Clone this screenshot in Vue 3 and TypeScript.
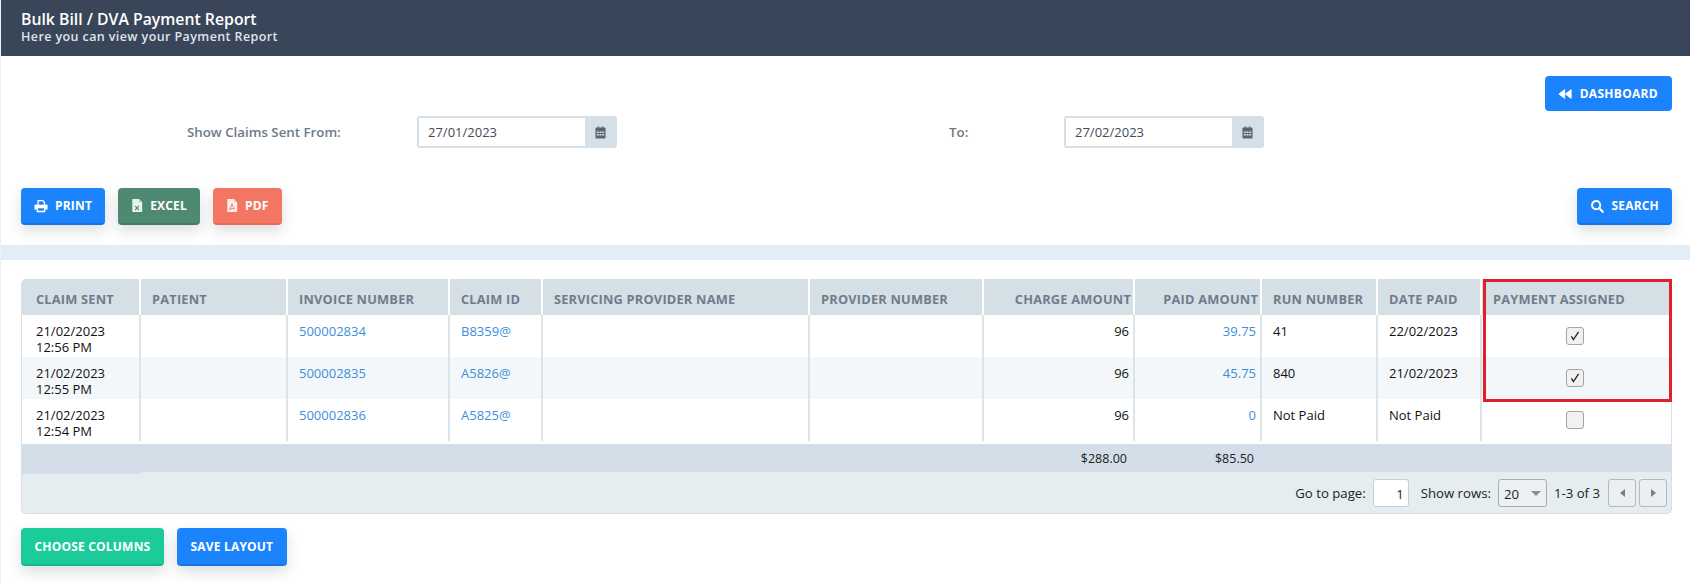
<script setup lang="ts">
interface Row {
  date: string
  time: string
  invoice: string
  claim: string
  paid: string
  run: string
  datePaid: string
  assigned: boolean
}

const columns: { label: string; width: number; right?: boolean }[] = [
  { label: 'Claim Sent', width: 119 },
  { label: 'Patient', width: 147 },
  { label: 'Invoice Number', width: 162 },
  { label: 'Claim ID', width: 93 },
  { label: 'Servicing Provider Name', width: 267 },
  { label: 'Provider Number', width: 174 },
  { label: 'Charge Amount', width: 151, right: true },
  { label: 'Paid Amount', width: 127, right: true },
  { label: 'Run Number', width: 116 },
  { label: 'Date Paid', width: 104 },
  { label: 'Payment Assigned', width: 189 }
]

const rows: Row[] = [
  { date: '21/02/2023', time: '12:56 PM', invoice: '500002834', claim: 'B8359@', paid: '39.75', run: '41', datePaid: '22/02/2023', assigned: true },
  { date: '21/02/2023', time: '12:55 PM', invoice: '500002835', claim: 'A5826@', paid: '45.75', run: '840', datePaid: '21/02/2023', assigned: true },
  { date: '21/02/2023', time: '12:54 PM', invoice: '500002836', claim: 'A5825@', paid: '0', run: 'Not Paid', datePaid: 'Not Paid', assigned: false }
]
</script>

<template>
  <div class="page">
    <header class="banner">
      <h1>Bulk Bill / DVA Payment Report</h1>
      <p>Here you can view your Payment Report</p>
    </header>

    <section class="controls">
      <div class="dash-row">
        <button class="btn blue flat">
          <svg class="ico" viewBox="0 0 16 16"><path d="M7.6 3v10L1 8zM15 3v10L8.4 8z" fill="#fff" stroke="#fff" stroke-width="1" stroke-linejoin="round" /></svg>
          Dashboard
        </button>
      </div>

      <div class="filters">
        <label class="lbl from">Show Claims Sent From:</label>
        <div class="date">
          <input value="27/01/2023" readonly />
          <span class="addon">
            <svg viewBox="0 0 12 14" width="11" height="13"><path d="M3 0.5h1.4v2H3zM7.6 0.5H9v2H7.6z" fill="#5a6574" /><rect x="0.5" y="1.6" width="11" height="12" rx="1.2" fill="#5a6574" /><path d="M2 6h2.2v1.6H2zM4.9 6h2.2v1.6H4.9zM7.8 6H10v1.6H7.8zM2 8.6h2.2v1.6H2zM4.9 8.6h2.2v1.6H4.9zM7.8 8.6H10v1.6H7.8z" fill="#d4dfe8" /></svg>
          </span>
        </div>
        <label class="lbl to">To:</label>
        <div class="date">
          <input value="27/02/2023" readonly />
          <span class="addon">
            <svg viewBox="0 0 12 14" width="11" height="13"><path d="M3 0.5h1.4v2H3zM7.6 0.5H9v2H7.6z" fill="#5a6574" /><rect x="0.5" y="1.6" width="11" height="12" rx="1.2" fill="#5a6574" /><path d="M2 6h2.2v1.6H2zM4.9 6h2.2v1.6H4.9zM7.8 6H10v1.6H7.8zM2 8.6h2.2v1.6H2zM4.9 8.6h2.2v1.6H4.9zM7.8 8.6H10v1.6H7.8z" fill="#d4dfe8" /></svg>
          </span>
        </div>
      </div>

      <div class="actions">
        <div class="group">
          <button class="btn blue">
            <svg class="ico" viewBox="0 0 16 16"><path fill="#fff" fill-rule="evenodd" d="M4 1h6.4L12.5 3v3.2H14a1.5 1.5 0 0 1 1.5 1.5V12H13v3H3v-3H.5V7.7A1.5 1.5 0 0 1 2 6.2h2zM5.5 2.5v4h5.5V3.6L9.8 2.5zM4.6 10.6v2.9h6.8v-2.9z" /></svg>
            Print
          </button>
          <button class="btn green">
            <svg class="ico file" viewBox="2 0 12 16"><path d="M3 1h7l3.5 3.5V15H3z" fill="#eaf4ef" /><path d="M10 1v3.5h3.5" fill="#b9d4c8" /><path d="M6 8.5l4 4.5M10 8.5L6 13" stroke="#4e8a72" stroke-width="1.2" fill="none" /></svg>
            Excel
          </button>
          <button class="btn red">
            <svg class="ico file" viewBox="2 0 12 16"><path d="M3 1h7l3.5 3.5V15H3z" fill="#fdeee9" /><path d="M10 1v3.5h3.5" fill="#f8c4b9" /><path d="M8 6c-.6 2 -1.6 5 -3 6.5c2-1.4 4-1.6 6-1.4c-1.4-1-2.6-3.2-3-5.1z" stroke="#f27663" stroke-width="1" fill="none" /></svg>
            PDF
          </button>
        </div>
        <button class="btn blue">
          <svg class="ico" viewBox="0 0 16 16"><circle cx="7" cy="7" r="4.7" fill="none" stroke="#fff" stroke-width="2.2" /><path d="M10.6 10.6L14.5 14.5" stroke="#fff" stroke-width="2.6" stroke-linecap="round" /></svg>
          Search
        </button>
      </div>
    </section>

    <div class="band"></div>

    <section class="results">
      <div class="grid-wrap">
        <table>
          <colgroup>
            <col v-for="c in columns" :key="c.label" :style="{ width: c.width + 'px' }" />
          </colgroup>
          <thead>
            <tr>
              <th v-for="c in columns" :key="c.label" :class="{ right: c.right }">{{ c.label }}</th>
            </tr>
          </thead>
          <tbody>
            <tr v-for="r in rows" :key="r.invoice">
              <td>{{ r.date }}<br />{{ r.time }}</td>
              <td></td>
              <td><a>{{ r.invoice }}</a></td>
              <td><a>{{ r.claim }}</a></td>
              <td></td>
              <td></td>
              <td class="right">96</td>
              <td class="right"><a>{{ r.paid }}</a></td>
              <td>{{ r.run }}</td>
              <td>{{ r.datePaid }}</td>
              <td class="check-cell">
                <span class="check" :class="{ on: r.assigned }">
                  <svg v-if="r.assigned" viewBox="0 0 12 12" width="12" height="12"><path d="M2.4 6.4l2 3.2L9.6 1.8" fill="none" stroke="#222" stroke-width="1.3" /></svg>
                </span>
              </td>
            </tr>
          </tbody>
          <tfoot>
            <tr>
              <td></td><td></td><td></td><td></td><td></td><td></td>
              <td class="right">$288.00</td>
              <td class="right">$85.50</td>
              <td></td><td></td><td></td>
            </tr>
          </tfoot>
        </table>

        <div class="pager">
          <span>Go to page:</span>
          <input class="page-input" value="1" readonly />
          <span class="rows-label">Show rows:</span>
          <span class="select">20<i class="caret"></i></span>
          <span class="count">1-3 of 3</span>
          <button class="nav"><i class="tri left"></i></button>
          <button class="nav"><i class="tri next"></i></button>
        </div>

        <div class="highlight"></div>
      </div>

      <div class="bottom">
        <button class="btn teal tall">Choose Columns</button>
        <button class="btn blue tall">Save Layout</button>
      </div>
    </section>
  </div>
</template>

<style>
html, body { margin: 0; background: #fff; }
</style>

<style scoped>
.page {
  height: 583px;
  box-sizing: border-box;
  border-left: 1px solid #eef0f4;
  font-family: "Open Sans", "Liberation Sans", sans-serif;
  font-size: 13px;
  color: #1b1b1b;
  overflow: hidden;
}
.banner {
  height: 56px;
  box-sizing: border-box;
  padding: 10px 20px 0;
  background: #394559;
  color: #fff;
}
.banner h1 { margin: 0; font-size: 15.8px; line-height: 18px; font-weight: 600; }
.banner p { margin: 0; font-size: 12.5px; line-height: 18px; font-weight: 600; color: #dfe4ea; letter-spacing: .4px; }

.controls { padding: 20px 18px 0 20px; }
.dash-row { display: flex; justify-content: flex-end; }
.filters { display: flex; align-items: center; margin-top: 5px; }
.lbl { color: #6d7a88; font-weight: 600; font-size: 13.3px; }
.from { margin-left: 166px; width: 230px; }
.to { margin-left: 332px; width: 115px; }
.date {
  display: flex;
  width: 200px;
  height: 32px;
  box-sizing: border-box;
  border: 2px solid #d4dfe8;
  border-radius: 3px;
  background: #d4dfe8;
}
.date input {
  width: 166px;
  box-sizing: border-box;
  border: 0;
  outline: 0;
  padding: 0 0 0 9px;
  background: #fff;
  font: 13px "Open Sans", sans-serif;
  color: #444b55;
}
.addon { flex: 1; display: flex; align-items: center; justify-content: center; }

.actions { display: flex; justify-content: space-between; margin-top: 40px; }
.group { display: flex; gap: 13px; }
.btn {
  display: inline-flex;
  align-items: center;
  justify-content: center;
  gap: 7px;
  height: 37px;
  box-sizing: border-box;
  padding: 0 13px;
  border: 0;
  border-bottom: 2px solid transparent;
  border-radius: 4px;
  font: 700 12px "Open Sans", sans-serif;
  letter-spacing: .2px;
  text-transform: uppercase;
  color: #fff;
  box-shadow: 0 6px 14px rgba(40, 50, 70, .16);
}
.ico { width: 14px; height: 14px; flex: none; }
.ico.file { width: 12px; height: 15px; }
.blue { background: #1b84fd; border-bottom-color: #1673e0; }
.flat { height: 35px; padding: 0 14px 0 13px; gap: 8px; border-bottom: 0; box-shadow: none; letter-spacing: .3px; }
.green { background: #4e8a72; border-bottom-color: #457b66; }
.red { background: #f27663; border-bottom-color: #e96a58; }
.teal { background: #1ccb9a; border-bottom-color: #18b58a; }
.tall { height: 38px; }

.band { height: 15px; margin-top: 20px; background: #e3edf8; }

.results { padding: 19px 18px 0 20px; }
.grid-wrap {
  position: relative;
  border: 1px solid #d6e1e7;
  border-top: 0;
  border-radius: 5px;
  background: #e6edf0;
}
table {
  width: 1649px;
  table-layout: fixed;
  border-collapse: separate;
  border-spacing: 0;
}
th {
  height: 36px;
  padding: 3px 2px 0 11px;
  box-sizing: border-box;
  background: #d5e0e6;
  border-right: 2px solid #fff;
  font-size: 12.8px;
  font-weight: 700;
  text-align: left;
  text-transform: uppercase;
  color: #6f7c8b;
  white-space: nowrap;
  letter-spacing: .2px;
}
th:first-child { padding-left: 14px; border-top-left-radius: 5px; }
th:last-child { border-right: 0; border-top-right-radius: 5px; }
tbody td {
  height: 42px;
  padding: 8px 5px 0 11px;
  box-sizing: border-box;
  vertical-align: top;
  background: #fff;
  border-right: 2px solid #dbe5e9;
  line-height: 16px;
  color: #111;
  white-space: nowrap;
}
th.right { text-align: right; }
tbody td:first-child { padding-left: 14px; }
tbody td:last-child { border-right: 0; }
tbody tr:nth-child(2) td { background: #f3f7f9; }
tbody td.right { text-align: right; padding-right: 4px; }
a { color: #3b8fdb; }
tbody td.check-cell { text-align: center; padding: 12px 3px 0 0; }
.check {
  display: inline-flex;
  align-items: center;
  justify-content: center;
  width: 18px;
  height: 18px;
  box-sizing: border-box;
  border: 1px solid #a5a5a5;
  border-radius: 3px;
  background: #f1f1f1;
}
tfoot td {
  height: 31px;
  padding: 3px 5px 0 0;
  box-sizing: border-box;
  background: linear-gradient(#fff 3px, #d3dee9 3px);
  font-size: 12.5px;
  color: #222;
}
tfoot td.right { text-align: right; padding-right: 8px; }
tfoot td:first-child { box-shadow: 0 2px 0 #d3dee9; }

.pager {
  display: flex;
  align-items: center;
  justify-content: flex-end;
  height: 41px;
  padding-right: 4px;
  box-sizing: border-box;
  font-size: 13.2px;
  color: #222;
}
.page-input {
  width: 36px;
  height: 28px;
  box-sizing: border-box;
  margin-left: 7px;
  padding: 2px 4px 0 0;
  border: 1px solid #c9ced2;
  border-radius: 3px;
  outline: 0;
  background: #fff;
  text-align: right;
  font: 13px "Open Sans", sans-serif;
  color: #222;
}
.rows-label { margin-left: 12px; }
.select {
  display: flex;
  align-items: center;
  justify-content: space-between;
  width: 49px;
  height: 28px;
  box-sizing: border-box;
  margin-left: 7px;
  padding: 2px 5px 0 5px;
  border: 1px solid #a9adb1;
  border-radius: 3px;
  background: #edf0f2;
}
.caret {
  width: 0;
  height: 0;
  border-left: 5px solid transparent;
  border-right: 5px solid transparent;
  border-top: 5px solid #8b8f93;
}
.count { margin: 0 8px 0 7px; }
.nav {
  display: flex;
  align-items: center;
  justify-content: center;
  width: 28px;
  height: 28px;
  margin-left: 3px;
  padding: 0;
  border: 1px solid #b4b8bb;
  border-radius: 3px;
  background: #eceff1;
}
.nav:first-of-type { margin-left: 0; }
.tri {
  width: 0;
  height: 0;
  border-top: 4.5px solid transparent;
  border-bottom: 4.5px solid transparent;
}
.tri.left { border-right: 5px solid #7a7f84; }
.tri.next { border-left: 5px solid #7a7f84; }

.highlight {
  position: absolute;
  top: 0;
  left: 1461px;
  width: 189px;
  height: 123px;
  box-sizing: border-box;
  border: 3px solid #e0202c;
  pointer-events: none;
}

.bottom { display: flex; gap: 13px; margin-top: 14px; }
.bottom .btn { padding: 0 13.5px; }
</style>
